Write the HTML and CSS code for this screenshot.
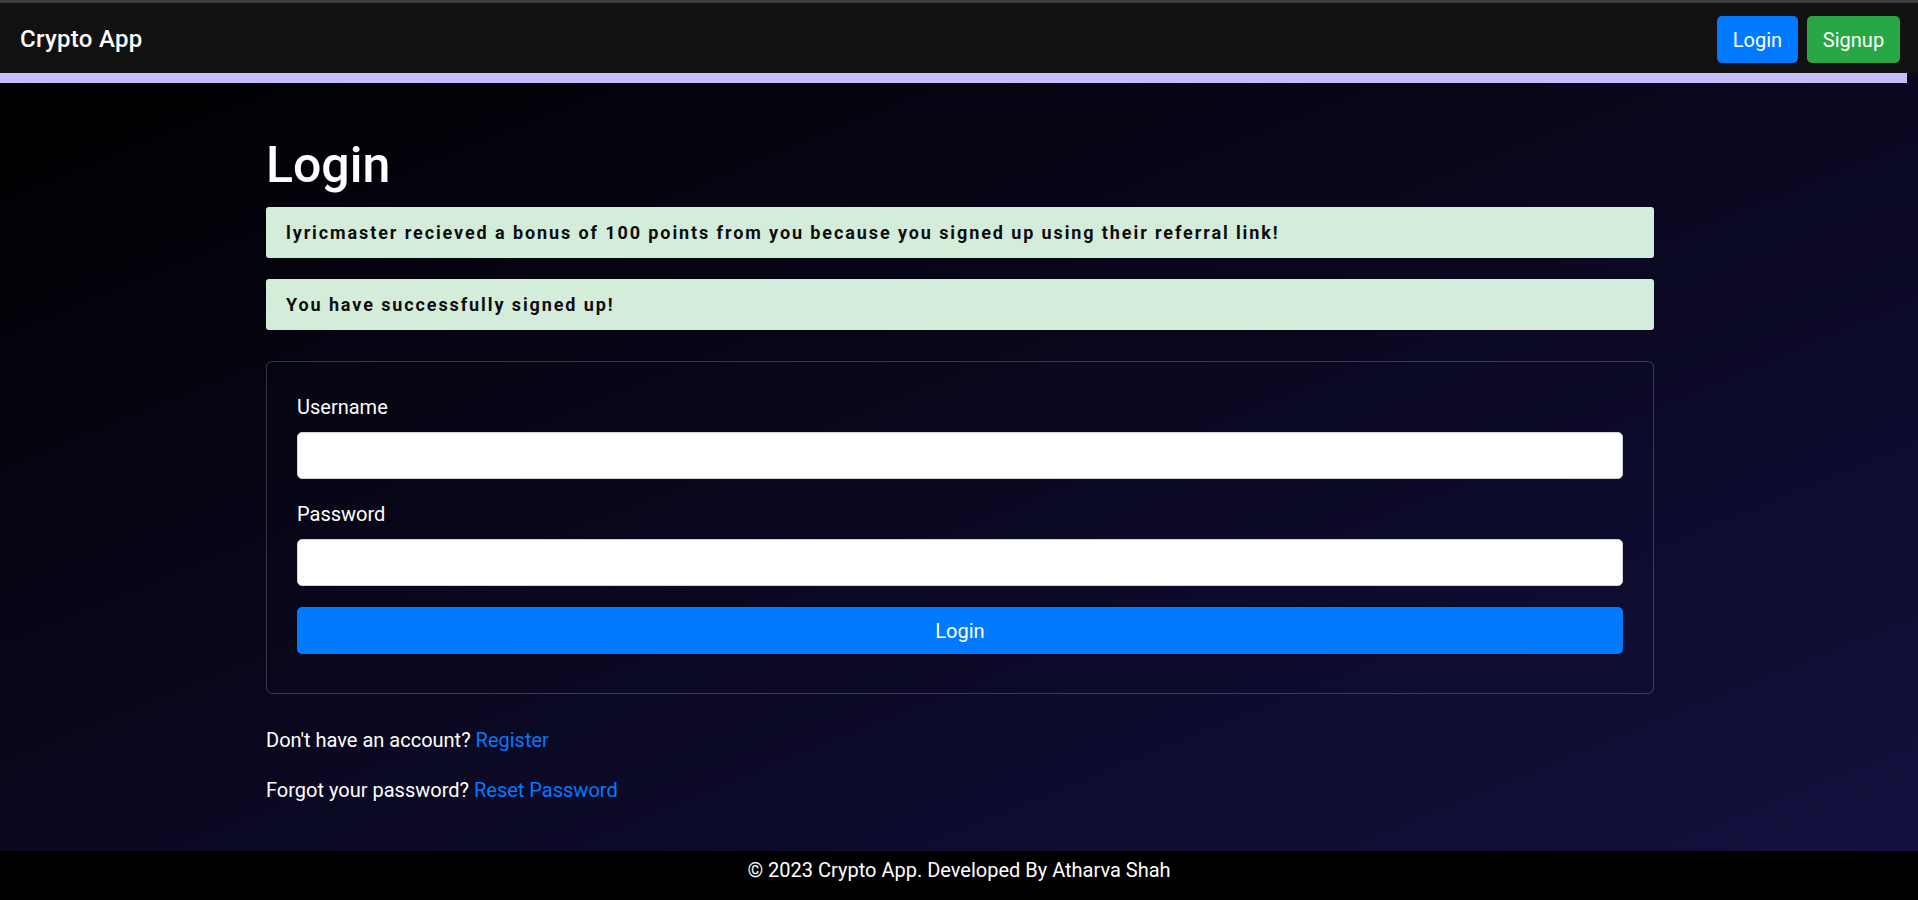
FILE: index.html
```html
<!DOCTYPE html>
<html lang="en">
<head>
<meta charset="utf-8">
<title>Login - Crypto App</title>
<link rel="stylesheet" href="styles.css">
</head>
<body>
<header class="navbar">
  <a class="brand" href="#">Crypto App</a>
  <nav class="nav-actions">
    <a class="btn btn-blue" href="#">Login</a>
    <a class="btn btn-green" href="#">Signup</a>
  </nav>
</header>
<div class="page">
  <div class="accent-bar"></div>
  <main class="container">
    <h1 class="title">Login</h1>
    <div class="alerts">
      <div class="alert">lyricmaster recieved a bonus of 100 points from you because you signed up using their referral link!</div>
      <div class="alert">You have successfully signed up!</div>
    </div>
    <form class="card">
      <label class="label" for="username">Username</label>
      <input class="input" id="username" type="text">
      <label class="label label-gap" for="password">Password</label>
      <input class="input" id="password" type="password">
      <button class="submit" type="button">Login</button>
    </form>
    <p class="note">Don't have an account? <a href="#">Register</a></p>
    <p class="note">Forgot your password? <a href="#">Reset Password</a></p>
  </main>
</div>
<footer class="footer">© 2023 Crypto App. Developed By Atharva Shah</footer>
</body>
</html>
```

FILE: styles.css
```css
* { box-sizing: border-box; }

html, body {
  margin: 0;
  padding: 0;
}

body {
  font-family: Roboto, "Liberation Sans", Arial, sans-serif;
  font-size: 20px;
  line-height: 30px;
  color: #fff;
  background: #000;
}

a { color: #007bff; text-decoration: none; }

.navbar {
  height: 73px;
  border-top: 3px solid #3d3d3d;
  background: #111111;
  display: flex;
  align-items: center;
  justify-content: space-between;
  padding: 0 18px 0 20px;
}

.brand {
  color: #fff;
  font-size: 24px;
  font-weight: 500;
  letter-spacing: 0.3px;
  line-height: 30px;
  margin-top: 1px;
}

.nav-actions {
  display: flex;
  gap: 9px;
  margin-top: 3px;
}

.btn {
  display: flex;
  align-items: center;
  justify-content: center;
  height: 47px;
  padding: 0 16px;
  border-radius: 5px;
  color: #fff;
  font-size: 20px;
}

.btn-blue { background: #007bff; width: 81px; }
.btn-green { background: #28a745; width: 93px; }

.page {
  background: linear-gradient(to bottom right, #000000 0%, #13103f 100%);
}

.accent-bar {
  height: 10px;
  margin-right: 11px;
  background: #c8bcfa;
}

.container {
  width: 1388px;
  margin-left: calc(50% - 693px);
  padding: 52px 0 26px;
}

.title {
  margin: 0 0 12px;
  font-size: 50px;
  font-weight: 500;
  line-height: 60px;
}

.alerts {
  display: flex;
  flex-direction: column;
  gap: 21px;
}

.alert {
  background: #d4edda;
  color: #0c0c0c;
  border-radius: 3px;
  padding: 12px 20px;
  font-size: 18px;
  font-weight: 700;
  line-height: 27px;
  letter-spacing: 1.9px;
}

.card {
  margin: 31px 0 0;
  border: 1px solid rgba(255, 255, 255, 0.2);
  border-radius: 6px;
  padding: 30px;
  display: flex;
  flex-direction: column;
}

.label {
  display: block;
  margin-bottom: 10px;
}

.label-gap { margin-top: 20px; }

.input {
  height: 47px;
  border: 1px solid #ced4da;
  border-radius: 5px;
  background: #fff;
  font-size: 20px;
  padding: 0 12px;
}

.submit {
  margin: 21px 0 9px;
  height: 47px;
  border: none;
  border-radius: 5px;
  background: #007bff;
  color: #fff;
  font-family: inherit;
  font-size: 20px;
}

.note {
  margin: 0 0 20px;
}

.card + .note { margin-top: 31px; }

.footer {
  background: #000;
  text-align: center;
  padding: 4px 0 15px;
}
```
